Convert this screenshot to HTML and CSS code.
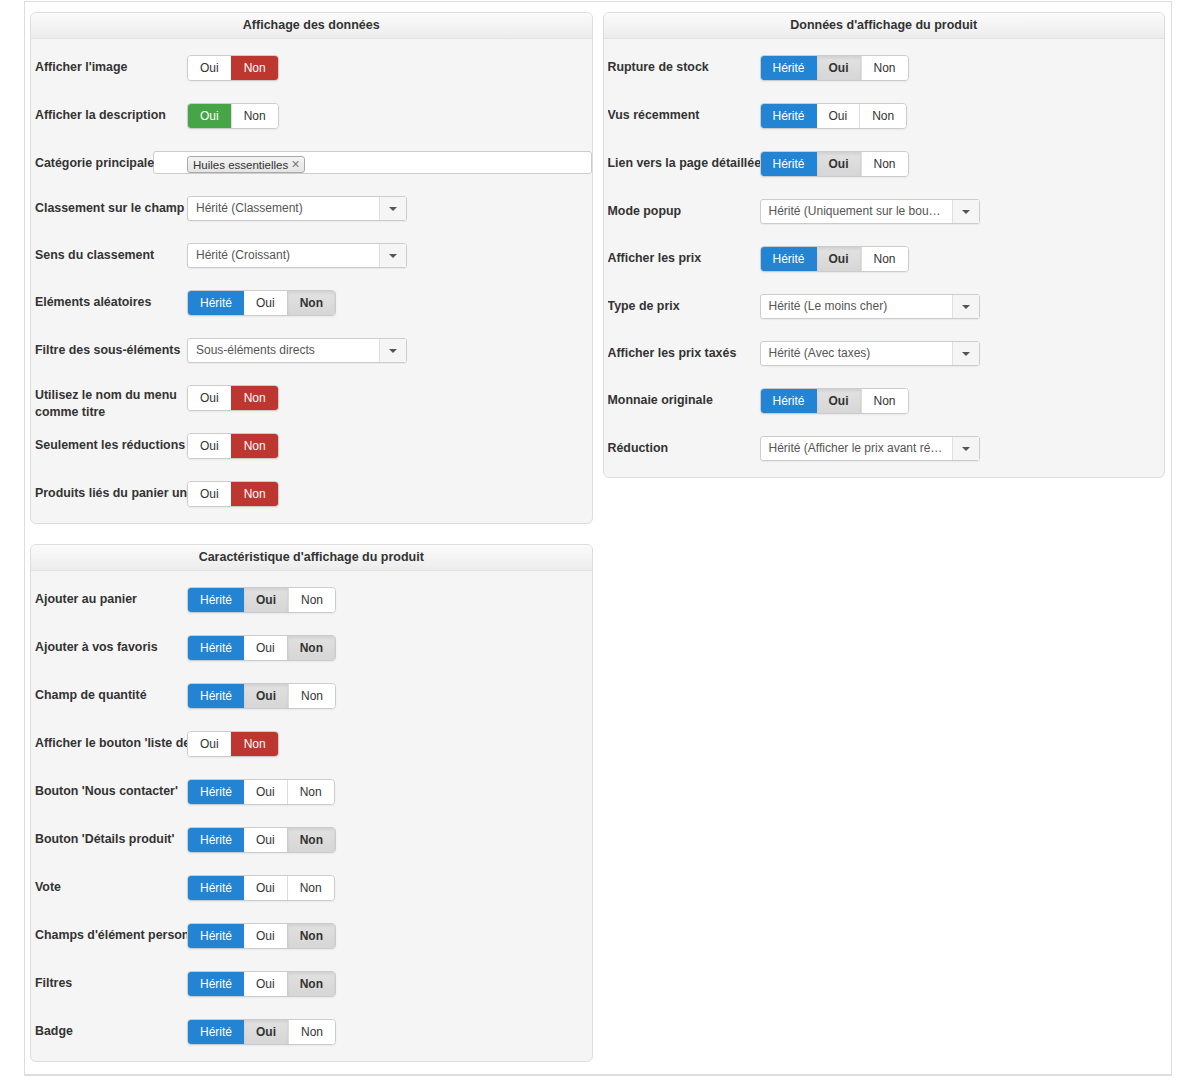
FILE: index.html
```html
<!DOCTYPE html>
<html lang="fr">
<head>
  <meta charset="UTF-8" />
  <title>Options d'affichage</title>
  <link rel="stylesheet" href="styles.css">
</head>
<body>
  <div class="wrapper">
    <div class="column">
      <div class="panel">
        <div class="panel-title">Affichage des données</div>
        <div class="panel-body">
          <div class="row">
            <div class="label">Afficher l'image</div>
            <div class="btn-group"><span class="btn">Oui</span><span class="btn red">Non</span></div>
          </div>
          <div class="row">
            <div class="label">Afficher la description</div>
            <div class="btn-group"><span class="btn green">Oui</span><span class="btn">Non</span></div>
          </div>
          <div class="row">
            <div class="label">Catégorie principale</div>
            <div class="tag-input"><span class="tag">Huiles essentielles <span class="tag-x">×</span></span></div>
          </div>
          <div class="row">
            <div class="label">Classement sur le champ</div>
            <div class="select"><span class="select-text">Hérité (Classement)</span><span class="select-arrow"></span></div>
          </div>
          <div class="row">
            <div class="label">Sens du classement</div>
            <div class="select"><span class="select-text">Hérité (Croissant)</span><span class="select-arrow"></span></div>
          </div>
          <div class="row">
            <div class="label">Eléments aléatoires</div>
            <div class="btn-group"><span class="btn blue">Hérité</span><span class="btn">Oui</span><span class="btn grey">Non</span></div>
          </div>
          <div class="row">
            <div class="label">Filtre des sous-éléments</div>
            <div class="select"><span class="select-text">Sous-éléments directs</span><span class="select-arrow"></span></div>
          </div>
          <div class="row">
            <div class="label wrap">Utilisez le nom du menu comme titre</div>
            <div class="btn-group"><span class="btn">Oui</span><span class="btn red">Non</span></div>
          </div>
          <div class="row">
            <div class="label">Seulement les réductions</div>
            <div class="btn-group"><span class="btn">Oui</span><span class="btn red">Non</span></div>
          </div>
          <div class="row">
            <div class="label">Produits liés du panier uniquement</div>
            <div class="btn-group"><span class="btn">Oui</span><span class="btn red">Non</span></div>
          </div>
        </div>
      </div>

      <div class="panel">
        <div class="panel-title">Caractéristique d'affichage du produit</div>
        <div class="panel-body">
          <div class="row">
            <div class="label">Ajouter au panier</div>
            <div class="btn-group"><span class="btn blue">Hérité</span><span class="btn grey">Oui</span><span class="btn">Non</span></div>
          </div>
          <div class="row">
            <div class="label">Ajouter à vos favoris</div>
            <div class="btn-group"><span class="btn blue">Hérité</span><span class="btn">Oui</span><span class="btn grey">Non</span></div>
          </div>
          <div class="row">
            <div class="label">Champ de quantité</div>
            <div class="btn-group"><span class="btn blue">Hérité</span><span class="btn grey">Oui</span><span class="btn">Non</span></div>
          </div>
          <div class="row">
            <div class="label">Afficher le bouton 'liste de souhaits'</div>
            <div class="btn-group"><span class="btn">Oui</span><span class="btn red">Non</span></div>
          </div>
          <div class="row">
            <div class="label">Bouton 'Nous contacter'</div>
            <div class="btn-group"><span class="btn blue">Hérité</span><span class="btn">Oui</span><span class="btn">Non</span></div>
          </div>
          <div class="row">
            <div class="label">Bouton 'Détails produit'</div>
            <div class="btn-group"><span class="btn blue">Hérité</span><span class="btn">Oui</span><span class="btn grey">Non</span></div>
          </div>
          <div class="row">
            <div class="label">Vote</div>
            <div class="btn-group"><span class="btn blue">Hérité</span><span class="btn">Oui</span><span class="btn">Non</span></div>
          </div>
          <div class="row">
            <div class="label">Champs d'élément personnalisé</div>
            <div class="btn-group"><span class="btn blue">Hérité</span><span class="btn">Oui</span><span class="btn grey">Non</span></div>
          </div>
          <div class="row">
            <div class="label">Filtres</div>
            <div class="btn-group"><span class="btn blue">Hérité</span><span class="btn">Oui</span><span class="btn grey">Non</span></div>
          </div>
          <div class="row">
            <div class="label">Badge</div>
            <div class="btn-group"><span class="btn blue">Hérité</span><span class="btn grey">Oui</span><span class="btn">Non</span></div>
          </div>
        </div>
      </div>
    </div>

    <div class="column">
      <div class="panel">
        <div class="panel-title">Données d'affichage du produit</div>
        <div class="panel-body">
          <div class="row">
            <div class="label">Rupture de stock</div>
            <div class="btn-group"><span class="btn blue">Hérité</span><span class="btn grey">Oui</span><span class="btn">Non</span></div>
          </div>
          <div class="row">
            <div class="label">Vus récemment</div>
            <div class="btn-group"><span class="btn blue">Hérité</span><span class="btn">Oui</span><span class="btn">Non</span></div>
          </div>
          <div class="row">
            <div class="label">Lien vers la page détaillée</div>
            <div class="btn-group"><span class="btn blue">Hérité</span><span class="btn grey">Oui</span><span class="btn">Non</span></div>
          </div>
          <div class="row">
            <div class="label">Mode popup</div>
            <div class="select"><span class="select-text">Hérité (Uniquement sur le bouton)</span><span class="select-arrow"></span></div>
          </div>
          <div class="row">
            <div class="label">Afficher les prix</div>
            <div class="btn-group"><span class="btn blue">Hérité</span><span class="btn grey">Oui</span><span class="btn">Non</span></div>
          </div>
          <div class="row">
            <div class="label">Type de prix</div>
            <div class="select"><span class="select-text">Hérité (Le moins cher)</span><span class="select-arrow"></span></div>
          </div>
          <div class="row">
            <div class="label">Afficher les prix taxés</div>
            <div class="select"><span class="select-text">Hérité (Avec taxes)</span><span class="select-arrow"></span></div>
          </div>
          <div class="row">
            <div class="label">Monnaie originale</div>
            <div class="btn-group"><span class="btn blue">Hérité</span><span class="btn grey">Oui</span><span class="btn">Non</span></div>
          </div>
          <div class="row">
            <div class="label">Réduction</div>
            <div class="select"><span class="select-text">Hérité (Afficher le prix avant réduction)</span><span class="select-arrow"></span></div>
          </div>
        </div>
      </div>
    </div>
  </div>
</body>
</html>
```

FILE: styles.css
```css
body, html {
  margin: 0;
  padding: 0;
  background: #fff;
  font-family: 'Liberation Sans', Arial, sans-serif;
  color: #333;
}

.wrapper {
  margin: 1px 0 0 24px;
  width: 1135px;
  min-height: 1062px;
  border: 1px solid #ddd;
  border-bottom-width: 2px;
  padding: 10px 6px 0 5px;
  display: flex;
  gap: 10px;
  align-items: flex-start;
}

.column {
  flex: 1;
  display: flex;
  flex-direction: column;
  gap: 20px;
}

.panel {
  background: #f5f5f5;
  border: 1px solid #ddd;
  border-radius: 6px;
  overflow: hidden;
}

.panel-title {
  height: 25px;
  line-height: 25px;
  text-align: center;
  font-size: 12.5px;
  font-weight: bold;
  color: #333;
  background: linear-gradient(to bottom, #fbfbfb, #ececec);
  border-bottom: 1px solid #e2e2e2;
}

.panel-body {
  padding: 16px 0 16px 4px;
  display: flex;
  flex-direction: column;
  gap: 22px;
}

.row {
  display: flex;
  align-items: flex-start;
}

.label {
  position: relative;
  z-index: 1;
  width: 152px;
  flex-shrink: 0;
  padding-top: 4px;
  font-size: 12.4px;
  line-height: 17px;
  font-weight: bold;
  color: #333;
  white-space: nowrap;
  overflow: hidden;
}

.label.wrap {
  white-space: normal;
  padding-top: 2px;
  margin-bottom: -10px;
}

/* toggle groups */
.btn-group {
  display: flex;
  border: 1px solid #ccc;
  border-radius: 4px;
  overflow: hidden;
  box-shadow: 0 1px 2px rgba(0, 0, 0, 0.06);
  background: #fff;
}

.btn {
  height: 24px;
  line-height: 24px;
  padding: 0 12px;
  font-size: 12px;
  color: #333;
  background: #fff;
  border-left: 1px solid #ddd;
}

.btn:first-child {
  border-left: none;
}

.btn.blue {
  background: #2384d3;
  color: #fff;
  border-color: #2384d3;
}

.btn.red {
  background: #bd362f;
  color: #fff;
  border-color: #bd362f;
}

.btn.green {
  background: #46a546;
  color: #fff;
  border-color: #46a546;
}

.btn.grey {
  background: linear-gradient(to bottom, #e2e2e2, #d6d6d6);
  box-shadow: inset 0 2px 3px rgba(0, 0, 0, 0.08);
  font-weight: bold;
  color: #333;
  border-color: #ccc;
}

.btn.blue + .btn {
  border-left: none;
}

/* selects */
.select {
  width: 218px;
  height: 23px;
  display: flex;
  border: 1px solid #ccc;
  border-radius: 3px;
  background: #fff;
  box-shadow: 0 1px 1px rgba(0, 0, 0, 0.05);
}

.select-text {
  flex: 1;
  min-width: 0;
  padding: 0 8px;
  line-height: 23px;
  font-size: 12px;
  color: #555;
  white-space: nowrap;
  overflow: hidden;
  text-overflow: ellipsis;
}

.select-arrow {
  width: 26px;
  flex-shrink: 0;
  border-left: 1px solid #e0e0e0;
  background: #f5f5f5;
  display: flex;
  align-items: center;
  justify-content: center;
}

.select-arrow::after {
  content: '';
  border-left: 4px solid transparent;
  border-right: 4px solid transparent;
  border-top: 4px solid #555;
}

/* tag field */
.tag-input {
  flex: 1;
  margin-left: -34px;
  height: 23px;
  border: 1px solid #ccc;
  border-radius: 3px;
  background: #fff;
  padding: 3px 0 0 33px;
  box-sizing: border-box;
}

.tag {
  display: inline-block;
  height: 15px;
  line-height: 15px;
  padding: 0 4px 0 5px;
  font-size: 11.5px;
  color: #333;
  background: linear-gradient(to bottom, #f4f4f4, #e4e4e4);
  border: 1px solid #aaa;
  border-radius: 3px;
}

.tag-x {
  color: #777;
  font-size: 14px;
}
```
